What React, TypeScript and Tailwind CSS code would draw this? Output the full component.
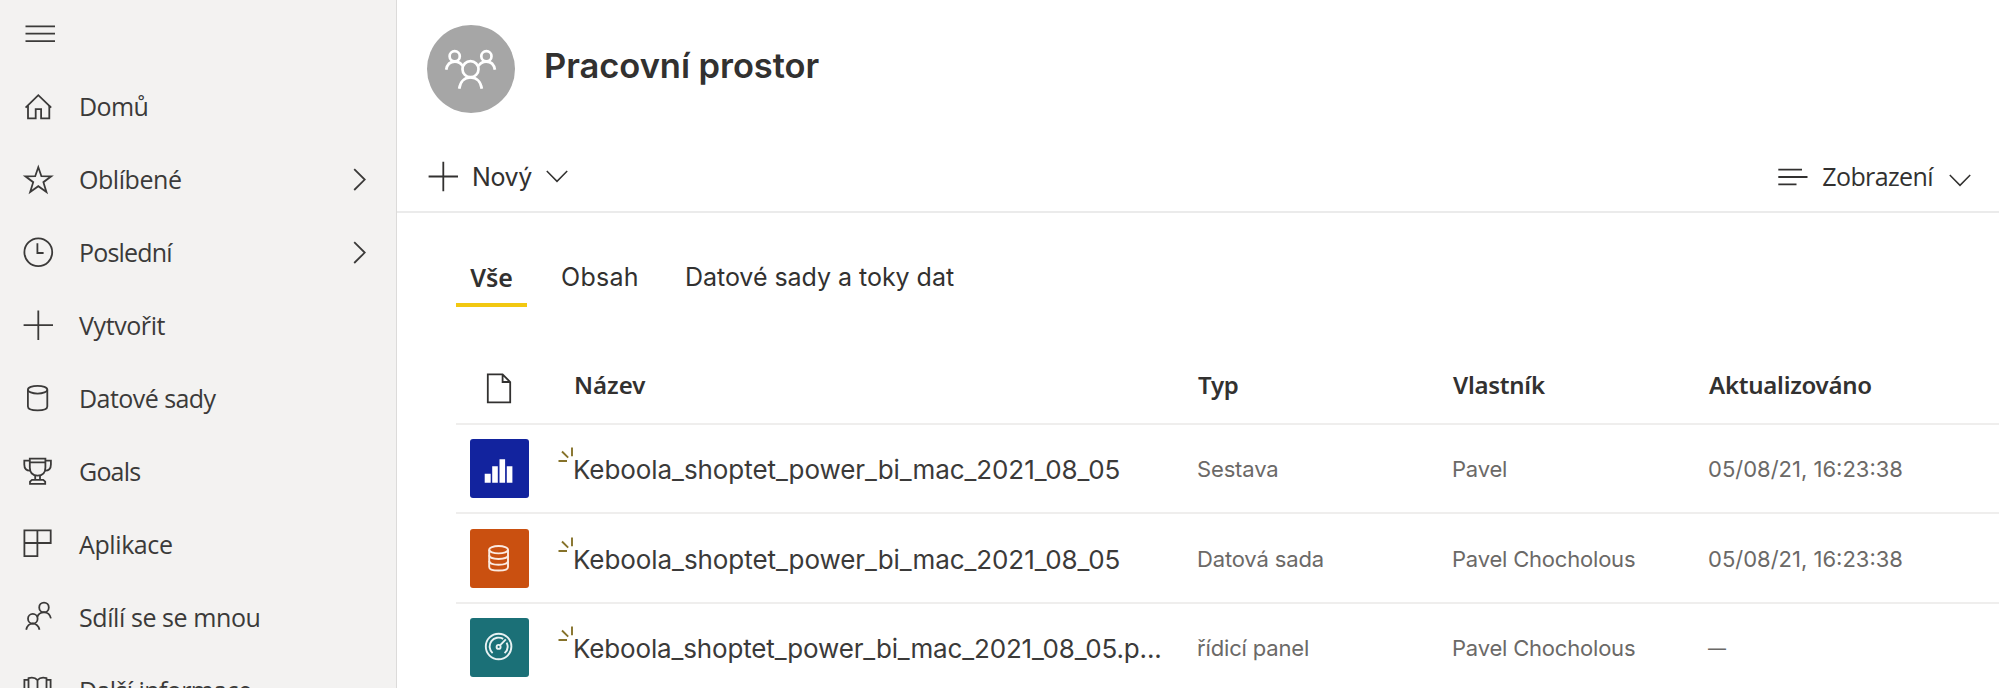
import type { ReactNode } from "react";

const stroke = { fill: "none", stroke: "currentColor", strokeWidth: 1.8 };

function NavIcon({ children }: { children: ReactNode }) {
  return (
    <svg width="36" height="36" viewBox="0 0 36 36" className="shrink-0" {...stroke}>
      {children}
    </svg>
  );
}

type NavItem = { label: string; tracking: string; icon: ReactNode; expandable?: boolean };

const navItems: NavItem[] = [
  {
    label: "Domů",
    tracking: "tracking-[-0.6px]",
    icon: (
      <>
        <path d="M5.6 18.7 18.3 6.2 31.2 18.7" />
        <path d="M8 16.6V29.3H15.7V20.2H21.1V29.3H29.3V16.6" />
      </>
    ),
  },
  {
    label: "Oblíbené",
    tracking: "tracking-[-0.45px]",
    expandable: true,
    icon: (
      <path d="M18.3 5.2 21.4 14.2 31.2 14.3 23.4 20.2 26.4 29.9 18.3 24.2 10.2 29.9 13.2 20.2 5.4 14.3 15.2 14.2Z" />
    ),
  },
  {
    label: "Poslední",
    tracking: "tracking-[-0.8px]",
    expandable: true,
    icon: (
      <>
        <circle cx="18.3" cy="17.2" r="13.9" />
        <path d="M17.4 8.3V18H23.6" />
      </>
    ),
  },
  { label: "Vytvořit", tracking: "tracking-[-0.4px]", icon: <path d="M18.3 2.5V31.9M3.6 17.2H33" /> },
  {
    label: "Datové sady",
    tracking: "tracking-[-0.55px]",
    icon: (
      <>
        <ellipse cx="17.6" cy="8.7" rx="9.7" ry="3.9" />
        <path d="M7.9 8.7V25.6C7.9 27.9 12 29.4 17.6 29.4S27.3 27.9 27.3 25.6V8.7" />
      </>
    ),
  },
  {
    label: "Goals",
    tracking: "tracking-[-0.8px]",
    icon: (
      <>
        <path d="M9.8 4.7H25.4V13.5C25.4 18.5 22.5 21.6 17.6 21.6S9.8 18.5 9.8 13.5ZM9.8 8.4H25.4" />
        <path d="M9.8 6.6H4.3V10.5C4.3 14.5 6.4 16.7 10.3 16.7M25.4 6.6H30.9V10.5C30.9 14.5 28.8 16.7 24.9 16.7" />
        <path d="M15.2 21.6V25.8M20 21.6V25.8M12 25.8H23.2L25.2 27.6V29.8H10V27.6Z" />
      </>
    ),
  },
  {
    label: "Aplikace",
    tracking: "tracking-[-0.4px]",
    icon: <path d="M4.4 3.3H30.7V16H4.4ZM4.4 16V29.2H17.4V3.3" />,
  },
  {
    label: "Sdílí se se mnou",
    tracking: "tracking-[-0.42px]",
    icon: (
      <>
        <circle cx="24" cy="7.4" r="4.8" />
        <path d="M17.2 17.2C18.2 13.8 20.7 12.3 24 12.3S30 14 30.9 18.4" />
        <circle cx="12.8" cy="18.7" r="4.8" />
        <path d="M6.2 29.8C7.1 25.7 9.5 23.6 12.8 23.6S18.5 25.7 19.5 29.8" />
      </>
    ),
  },
  {
    label: "Další informace",
    tracking: "tracking-[-0.6px]",
    icon: (
      <>
        <path d="M17.5 7.2C15.2 4.5 11.5 4.4 8.5 5.2V27C11.5 26.2 15.2 26.4 17.5 29 19.8 26.4 23.5 26.2 26.5 27V5.2C23.5 4.4 19.8 4.5 17.5 7.2ZM17.5 7.2V29" />
        <path d="M8.5 6.9H4.4V30.5H30.6V6.9H26.5" />
      </>
    ),
  },
];

function Sidebar() {
  return (
    <aside className="flex h-full w-[397px] shrink-0 flex-col border-r border-[#dcdbda] bg-[#f3f2f1] font-['Open_Sans',sans-serif] text-[25px] text-[#3b3a39]">
      <div className="flex h-[70px] shrink-0 items-start pt-[24px] pl-[25px]">
        <svg width="30" height="20" viewBox="0 0 30 20" {...stroke}>
          <path d="M.5 2.3H30M.5 9.7H30M.5 17.1H30" />
        </svg>
      </div>
      {navItems.map((item) => (
        <div key={item.label} className="flex h-[73px] shrink-0 items-center pr-[29px] pl-[20px]">
          <NavIcon>{item.icon}</NavIcon>
          <span className={`flex-1 pl-[23px] whitespace-nowrap ${item.tracking}`}>{item.label}</span>
          {item.expandable && (
            <svg width="14" height="24" viewBox="0 0 14 24" {...stroke}>
              <path d="M1.2 1.2 11.7 11.6 1.2 22" />
            </svg>
          )}
        </div>
      ))}
    </aside>
  );
}

function ChevronDown() {
  return (
    <svg width="22" height="13" viewBox="0 0 22 13" fill="none" stroke="currentColor" strokeWidth="1.5">
      <path d="M.8 1 11 11.4 21.2 1" />
    </svg>
  );
}

function Header() {
  return (
    <header className="flex h-[213px] shrink-0 flex-col border-b-2 border-[#ebebeb]">
      <div className="flex h-[138px] items-center pl-[30px]">
        <div className="size-[88px] rounded-full bg-[#a6a6a6]">
          <svg width="88" height="88" viewBox="0 0 88 88" fill="none" stroke="#fff" strokeWidth="2.7">
            <circle cx="27.7" cy="31.3" r="5.1" />
            <circle cx="59.4" cy="31.3" r="5.1" />
            <circle cx="43.5" cy="44.2" r="8" />
            <path d="M19.2 44.8C20 39.5 23.2 36.6 27.9 36.6 31.2 36.6 34 38.2 35.5 40.8M67.9 44.8C67.1 39.5 63.9 36.6 59.2 36.6 55.9 36.6 53.1 38.2 51.6 40.8" />
            <path d="M32.2 63.7C33.2 56.5 37.6 52.4 43.5 52.4S53.8 56.5 54.8 63.7" />
          </svg>
        </div>
        <h1 className="pb-[6px] pl-[29px] text-[34.5px] font-semibold tracking-[-0.05px]">Pracovní prostor</h1>
      </div>
      <div className="flex flex-1 items-center pt-[4px] pr-[28px] pl-[31px]">
        <svg width="31" height="31" viewBox="0 0 31 31" {...stroke}>
          <path d="M15.3.8V30.2M.6 15.5H30" />
        </svg>
        <span className="pt-[2px] pr-[14px] pl-[13px] tracking-[-0.4px]">Nový</span>
        <ChevronDown />
        <div className="ml-auto flex items-center">
          <svg width="30" height="18" viewBox="0 0 30 18" {...stroke}>
            <path d="M.3 1.6H24M.3 9H29.5M.3 16.3H18.5" />
          </svg>
          <span className="pt-px pr-[16px] pl-[14px] font-['Open_Sans',sans-serif] tracking-[-0.6px]">Zobrazení</span>
          <div className="pt-[8px]">
            <ChevronDown />
          </div>
        </div>
      </div>
    </header>
  );
}

function Tabs() {
  return (
    <nav className="mt-[40px] flex h-[54px] shrink-0 items-stretch pl-[59px]">
      <div className="w-[71px] border-b-4 border-[#f2c811] text-center font-['Noto_Sans',sans-serif] leading-[49px] font-semibold">
        Vše
      </div>
      <div className="pl-[34px] leading-[49px] tracking-[0.3px]">Obsah</div>
      <div className="pl-[46px] leading-[49px] tracking-[-0.03px]">Datové sady a toky dat</div>
    </nav>
  );
}

function ReportIcon() {
  return (
    <svg width="59" height="59" viewBox="0 0 59 59" fill="#fff">
      <path d="M14.7 34.7h6v9.1h-6zM22.2 27.3h5.6v16.5h-5.6zM29.5 20.2h5.6v23.6h-5.6zM36.8 27.3h5.6v16.5h-5.6z" />
    </svg>
  );
}

function DatasetIcon() {
  return (
    <svg width="59" height="59" viewBox="0 0 59 59" fill="none" stroke="#fbeae1" strokeWidth="1.9">
      <ellipse cx="28.6" cy="20.7" rx="9.4" ry="3.7" />
      <path d="M19.2 20.7V37.9C19.2 40.1 23.2 41.5 28.6 41.5S38 40.1 38 37.9V20.7" />
      <path d="M19.2 26.3C19.2 28.5 23.2 30 28.6 30S38 28.5 38 26.3M19.2 32.1C19.2 34.3 23.2 35.8 28.6 35.8S38 34.3 38 32.1" />
    </svg>
  );
}

function DashboardIcon() {
  return (
    <svg width="59" height="59" viewBox="0 0 59 59" fill="none" stroke="#e8f2f3" strokeWidth="1.9">
      <circle cx="28.6" cy="28.5" r="12.8" />
      <path d="M22.6 35.1A8.9 8.9 0 0 1 33.2 20.9M36.6 24.6A8.9 8.9 0 0 1 34.6 35.1" />
      <circle cx="28.6" cy="28.9" r="2" />
      <path d="M30 27.4 35.8 21.4" />
    </svg>
  );
}

type Row = {
  name: string;
  nameTracking: string;
  type: string;
  owner: string;
  updated: string;
  updatedSize: string;
  tile: string;
  height: string;
  icon: ReactNode;
};

const rows: Row[] = [
  {
    name: "Keboola_shoptet_power_bi_mac_2021_08_05",
    nameTracking: "tracking-[-0.07px]",
    type: "Sestava",
    owner: "Pavel",
    updated: "05/08/21, 16:23:38",
    updatedSize: "text-[22px]",
    tile: "bg-[#12239e]",
    height: "h-[89px]",
    icon: <ReportIcon />,
  },
  {
    name: "Keboola_shoptet_power_bi_mac_2021_08_05",
    nameTracking: "tracking-[-0.07px]",
    type: "Datová sada",
    owner: "Pavel Chocholous",
    updated: "05/08/21, 16:23:38",
    updatedSize: "text-[22px]",
    tile: "bg-[#ca5010]",
    height: "h-[90px]",
    icon: <DatasetIcon />,
  },
  {
    name: "Keboola_shoptet_power_bi_mac_2021_08_05.p...",
    nameTracking: "tracking-[-0.15px]",
    type: "řídicí panel",
    owner: "Pavel Chocholous",
    updated: "—",
    updatedSize: "text-[18px] leading-[33px]",
    tile: "bg-[#1b7077]",
    height: "h-[89px]",
    icon: <DashboardIcon />,
  },
];

const columns = "grid shrink-0 grid-cols-[116px_624px_255px_256px_1fr] items-center border-b-2 border-[#efeeed]";

function Table() {
  return (
    <div className="ml-[59px] flex flex-col pt-[36px]">
      <div className={`${columns} h-[82px] pt-[4px] font-['Noto_Sans',sans-serif] text-[24px] font-semibold tracking-[-0.25px]`}>
        <div className="pt-[6px] pl-[30px]">
          <svg width="26" height="31" viewBox="0 0 26 31" {...stroke}>
            <path d="M1.8 1.4H16.6L24.2 9V29.4H1.8ZM16.6 1.4V9H24.2" />
          </svg>
        </div>
        <div className="pl-[2px] tracking-normal">Název</div>
        <div className="pl-[2px]">Typ</div>
        <div className="pl-[2px]">Vlastník</div>
        <div className="pl-[2px]">Aktualizováno</div>
      </div>
      {rows.map((row) => (
        <div key={row.type} className={`${columns} ${row.height} text-[22px] tracking-[-0.15px] text-[#6b6967]`}>
          <div className={`ml-[14px] size-[59px] rounded-[3px] ${row.tile}`}>{row.icon}</div>
          <div className={`relative pt-[2px] pl-px text-[26px] whitespace-nowrap text-[#3b3a39] ${row.nameTracking}`}>
            <svg
              className="absolute top-[-1px] left-[-14px]"
              width="17"
              height="17"
              viewBox="0 0 17 17"
              fill="none"
              stroke="#86722a"
              strokeWidth="1.9"
            >
              <path d="M14 .5V9.3M4 4.5 10.2 10.6M.5 14H9" />
            </svg>
            {row.name}
          </div>
          <div className="pt-[2px] pl-px">{row.type}</div>
          <div className="pt-[2px] pl-px tracking-[-0.2px]">{row.owner}</div>
          <div className={`pt-[2px] pl-px tracking-normal ${row.updatedSize}`}>{row.updated}</div>
        </div>
      ))}
    </div>
  );
}

export default function App() {
  return (
    <div className="flex h-[688px] w-full overflow-hidden bg-white text-[#323130]">
      <Sidebar />
      <main className="flex min-w-0 flex-1 flex-col overflow-hidden font-['Inter',sans-serif] text-[25px]">
        <Header />
        <Tabs />
        <Table />
      </main>
    </div>
  );
}
